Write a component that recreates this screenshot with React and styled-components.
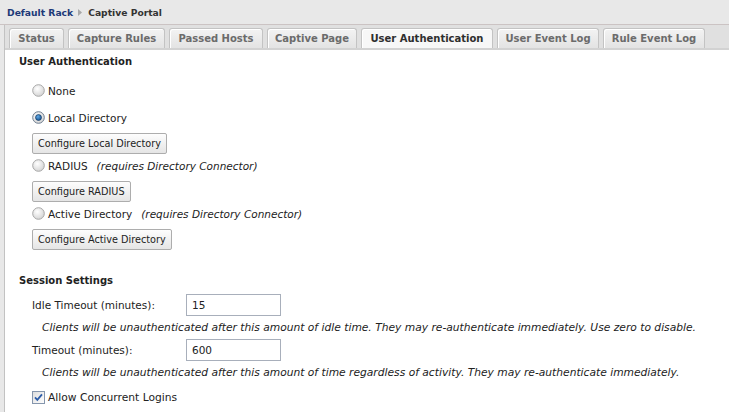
import React from "react";
import styled, { createGlobalStyle } from "styled-components";

const GlobalStyle = createGlobalStyle`
  html, body { margin: 0; padding: 0; background: #e8e8e8; }
  body {
    font-family: "DejaVu Sans", Verdana, sans-serif;
    font-size: 10.5px;
    color: #222;
  }
  #root { min-height: 100vh; display: flex; flex-direction: column; }
`;

const Header = styled.div`
  height: 24px;
  border-bottom: 1px solid #cbc3c3;
  display: flex;
  align-items: center;
  padding-left: 7px;
  font-weight: bold;
  font-size: 9.2px;
`;

const Crumb = styled.span`
  color: ${(p) => (p.$link ? "#1d3a78" : "#333")};
`;

const CrumbArrow = styled.svg`
  margin: 0 6px 0 5px;
`;

const Main = styled.div`
  flex: 1;
  display: flex;
  padding-left: 4px;
`;

const Panel = styled.div`
  flex: 1;
  display: flex;
  flex-direction: column;
  border-left: 1px solid #c2c2c2;
`;

const TabStrip = styled.div`
  display: flex;
  gap: 4px;
  padding: 3px 0 0 4px;
  background: #e0e0e0;
  border-bottom: 2px solid #d2d2d2;
`;

const Tab = styled.div`
  box-sizing: border-box;
  width: ${(p) => p.$w}px;
  height: 20px;
  display: flex;
  align-items: center;
  justify-content: center;
  border: 1px solid #c3c3c3;
  border-bottom: 0;
  border-radius: 3px 3px 0 0;
  box-shadow: inset 1px 1px 0 #ffffff;
  font-weight: bold;
  font-size: 10px;
  white-space: nowrap;
  color: ${(p) => (p.$active ? "#2e2e2e" : "#6b6b6b")};
  background: ${(p) =>
    p.$active ? "#f7f7f7" : "linear-gradient(#f3f3f3, #e3e3e3)"};
`;

const Content = styled.div`
  flex: 1;
  background: #ffffff;
  padding: 5px 14px 0 14px;
`;

const SectionTitle = styled.div`
  font-weight: bold;
  font-size: 10px;
  line-height: 14px;
  color: #222;
  margin-top: ${(p) => p.$mt || 0}px;
`;

const Indent = styled.div`
  padding-left: 13px;
  display: flex;
  flex-direction: column;
  align-items: flex-start;
`;

const RadioRow = styled.label`
  display: flex;
  align-items: center;
  height: 23px;
  gap: 3px;
  margin-top: ${(p) => p.$mt || 0}px;
`;

const Note = styled.span`
  font-style: italic;
  margin-left: 6px;
`;

const Button = styled.button`
  box-sizing: border-box;
  height: 21px;
  margin-top: 4px;
  padding: 0 5px;
  border: 1px solid #adadad;
  border-radius: 2px;
  background: linear-gradient(#fdfdfd, #e5e5e5);
  font-family: "DejaVu Sans", Verdana, sans-serif;
  font-size: 9.7px;
  color: #222;
`;

const FieldRow = styled.div`
  display: flex;
  align-items: center;
  height: 22px;
  margin-top: ${(p) => p.$mt || 0}px;
`;

const FieldLabel = styled.span`
  width: 154px;
`;

const TextInput = styled.input`
  box-sizing: border-box;
  width: 95px;
  height: 22px;
  border: 1px solid #a8afbb;
  padding: 0 5px;
  font-family: "DejaVu Sans", Verdana, sans-serif;
  font-size: 10.5px;
  color: #222;
  outline: none;
`;

const Help = styled.div`
  font-style: italic;
  font-size: 10.7px;
  line-height: 14px;
  padding-left: 10px;
  margin-top: 5px;
  white-space: nowrap;
`;

const CheckRow = styled.label`
  display: flex;
  align-items: center;
  gap: 3px;
  height: 14px;
  margin-top: 10px;
  font-size: 10.7px;
`;

function Radio({ checked }) {
  return (
    <svg width="13" height="13" viewBox="0 0 13 13">
      <defs>
        <radialGradient id={checked ? "rg1" : "rg0"} cx="0.4" cy="0.35" r="0.7">
          <stop offset="0" stopColor="#ffffff" />
          <stop offset="1" stopColor="#d2d2d2" />
        </radialGradient>
        <radialGradient id="dot" cx="0.4" cy="0.35" r="0.7">
          <stop offset="0" stopColor="#5fa9e6" />
          <stop offset="1" stopColor="#134e8c" />
        </radialGradient>
      </defs>
      <circle cx="6.5" cy="6.5" r="5.8" fill={`url(#${checked ? "rg1" : "rg0"})`} stroke={checked ? "#6d7d8f" : "#a7a7a7"} strokeWidth="1" />
      {checked && <circle cx="6.5" cy="6.5" r="3" fill="url(#dot)" stroke="#0e2f55" strokeWidth="0.6" />}
    </svg>
  );
}

function Checkbox() {
  return (
    <svg width="13" height="13" viewBox="0 0 13 13">
      <defs>
        <linearGradient id="cbg" x1="0" y1="0" x2="1" y2="1">
          <stop offset="0" stopColor="#dcdcdc" />
          <stop offset="1" stopColor="#ffffff" />
        </linearGradient>
      </defs>
      <rect x="0.5" y="0.5" width="12" height="12" fill="url(#cbg)" stroke="#8596ad" />
      <path d="M3 6.3 L5.3 8.8 L10 3.3" fill="none" stroke="#2c5ca8" strokeWidth="1.8" />
    </svg>
  );
}

const tabs = [
  { label: "Status", w: 55 },
  { label: "Capture Rules", w: 97 },
  { label: "Passed Hosts", w: 94 },
  { label: "Captive Page", w: 90 },
  { label: "User Authentication", w: 132, active: true },
  { label: "User Event Log", w: 102 },
  { label: "Rule Event Log", w: 102 },
];

export default function App() {
  return (
    <>
      <GlobalStyle />
      <Header>
        <Crumb $link>Default Rack</Crumb>
        <CrumbArrow width="4" height="7" viewBox="0 0 4 7">
          <path d="M0 0 L4 3.5 L0 7 Z" fill="#a8a8a8" />
        </CrumbArrow>
        <Crumb>Captive Portal</Crumb>
      </Header>
      <Main>
        <Panel>
          <TabStrip>
            {tabs.map((t) => (
              <Tab key={t.label} $w={t.w} $active={t.active}>
                {t.label}
              </Tab>
            ))}
          </TabStrip>
          <Content>
            <SectionTitle>User Authentication</SectionTitle>
            <Indent>
              <RadioRow $mt={10}>
                <Radio />
                None
              </RadioRow>
              <RadioRow $mt={4}>
                <Radio checked />
                Local Directory
              </RadioRow>
              <Button>Configure Local Directory</Button>
              <RadioRow>
                <Radio />
                RADIUS<Note>(requires Directory Connector)</Note>
              </RadioRow>
              <Button>Configure RADIUS</Button>
              <RadioRow>
                <Radio />
                Active Directory<Note>(requires Directory Connector)</Note>
              </RadioRow>
              <Button>Configure Active Directory</Button>
            </Indent>
            <SectionTitle $mt={24}>Session Settings</SectionTitle>
            <Indent>
              <FieldRow $mt={6}>
                <FieldLabel>Idle Timeout (minutes):</FieldLabel>
                <TextInput defaultValue="15" />
              </FieldRow>
              <Help>
                Clients will be unauthenticated after this amount of idle time. They may re-authenticate immediately. Use zero to disable.
              </Help>
              <FieldRow $mt={4}>
                <FieldLabel>Timeout (minutes):</FieldLabel>
                <TextInput defaultValue="600" />
              </FieldRow>
              <Help>
                Clients will be unauthenticated after this amount of time regardless of activity. They may re-authenticate immediately.
              </Help>
              <CheckRow>
                <Checkbox />
                Allow Concurrent Logins
              </CheckRow>
            </Indent>
          </Content>
        </Panel>
      </Main>
    </>
  );
}
